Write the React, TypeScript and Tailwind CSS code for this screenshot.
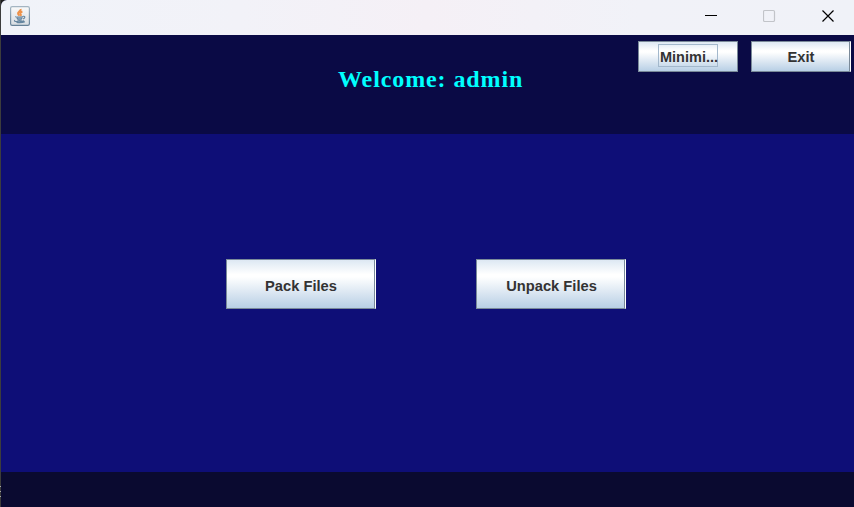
import React from 'react';

type ButtonProps = {
  label: string;
  className: string;
  focused?: boolean;
};

function MetalButton({ label, className, focused = false }: ButtonProps) {
  return (
    <button
      className={`flex shrink-0 items-center justify-center border border-[#7a8a99] bg-[linear-gradient(to_bottom,#dde8f3_0%,#ffffff_30%,#ffffff_35%,#b8cfe5_100%)] text-[14.7px] leading-[17px] font-bold text-[#333333] ${className}`}
    >
      <span
        className={
          focused
            ? 'mb-0.5 flex h-[23px] w-[60px] items-center justify-center border border-[#a3b8cc] pt-1 pl-0.5 text-[14.5px] whitespace-nowrap'
            : 'whitespace-nowrap'
        }
      >
        {label}
      </span>
    </button>
  );
}

function JavaIcon() {
  return (
    <svg width="20" height="20" viewBox="0 0 20 20" fill="none">
      <defs>
        <linearGradient id="tile" x1="0" y1="0" x2="0" y2="1">
          <stop stopColor="#fafafa" />
          <stop offset="1" stopColor="#d6dce1" />
        </linearGradient>
        <linearGradient id="edge" x1="0" y1="0" x2="0" y2="1">
          <stop stopColor="#a4b5c2" />
          <stop offset="1" stopColor="#668298" />
        </linearGradient>
      </defs>
      <rect x=".6" y=".6" width="18.8" height="18.8" rx="1.6" fill="url(#tile)" stroke="url(#edge)" strokeWidth="1.2" />
      <path d="M10.7 3c.7 1.8-3.5 2.7-2.7 4.8.2.7 1 1.2 1.2 2M12.4 5.5C10 6.4 9.8 7.2 10.6 8c.6.7.3 1.4-.3 1.9" stroke="#ee9148" strokeWidth="1.9" />
      <path d="M6 10.5c-1.7.8 5.3 1 7 .1M6.7 12.3c1.5.7 4.3.6 5.7 0M7.2 13.8c1.4.6 3.4.6 4.6 0M13.2 10.4c2.2-.5 2.1 1.8-.1 2.4M5.1 14.3c-3 1.3 5.6 2.2 9.1.6M6.5 16.5c3 .4 6.4.2 8.4-.8" stroke="#6586a0" strokeWidth="1.2" />
    </svg>
  );
}

export default function App() {
  return (
    <div className="flex h-[507px] w-[854px] overflow-hidden bg-[#1c1c1c] font-['Liberation_Sans',Arial,sans-serif]">
      <div className="flex w-px shrink-0 flex-col bg-[#3c3c3c] pt-[486px]">
        <div className="mb-1 h-px bg-[#aaaaaa]" />
        <div className="mb-1 h-px bg-[#aaaaaa]" />
        <div className="h-px bg-[#aaaaaa]" />
      </div>
      <main className="flex w-[853px] flex-col overflow-hidden rounded-tl-[6px] bg-[#0a0a45]">
        <header className="flex h-[35px] shrink-0 bg-[linear-gradient(to_right,#f0f3f9_0%,#f2f2f8_28%,#f5f0f6_50%,#f1f2f8_75%,#f0f2f8_100%)] pt-1.5 pl-[9px]">
          <JavaIcon />
          <div className="mr-[19px] ml-auto flex h-[19px] items-center gap-[46px]">
            <svg width="13" height="13" viewBox="0 0 13 13">
              <path d="M1 6h12v1H1z" fill="#000" />
            </svg>
            <svg width="13" height="13" viewBox="0 0 13 13" fill="none">
              <rect x=".5" y="1.5" width="11" height="11" rx="1.2" stroke="#c2c4c9" strokeWidth="1.2" />
            </svg>
            <svg width="13" height="13" viewBox="0 0 13 13">
              <path d="M.5 1.5l11 11M11.5 1.5l-11 11" stroke="#000" strokeWidth="1.2" />
            </svg>
          </div>
        </header>
        <section className="flex h-[99px] shrink-0 bg-[#0a0a45]">
          <h1 className="ml-[337px] w-[300px] pt-[30px] font-['Liberation_Serif',serif] text-[24px] leading-[28px] font-bold tracking-[0.9px] whitespace-nowrap text-[#00ffff]">
            Welcome: admin
          </h1>
          <div className="flex gap-[13px] pt-1.5">
            <MetalButton label="Minimi..." className="h-[31px] w-[100px]" focused />
            <MetalButton label="Exit" className="h-[31px] w-[100px] border-r-white pt-0.5 shadow-[inset_-1px_0_#7a8a99]" />
          </div>
        </section>
        <section className="flex h-[338px] shrink-0 items-start justify-center gap-[100px] bg-[#0e0e77] pt-[125px] pr-[3px]">
          <MetalButton label="Pack Files" className="h-[50px] w-[150px] border-r-white pt-1 shadow-[inset_-1px_0_#7a8a99]" />
          <MetalButton label="Unpack Files" className="h-[50px] w-[150px] border-r-white pt-1 pl-px shadow-[inset_-1px_0_#7a8a99]" />
        </section>
        <footer className="h-[35px] shrink-0 bg-[#0a0a30]" />
      </main>
    </div>
  );
}
